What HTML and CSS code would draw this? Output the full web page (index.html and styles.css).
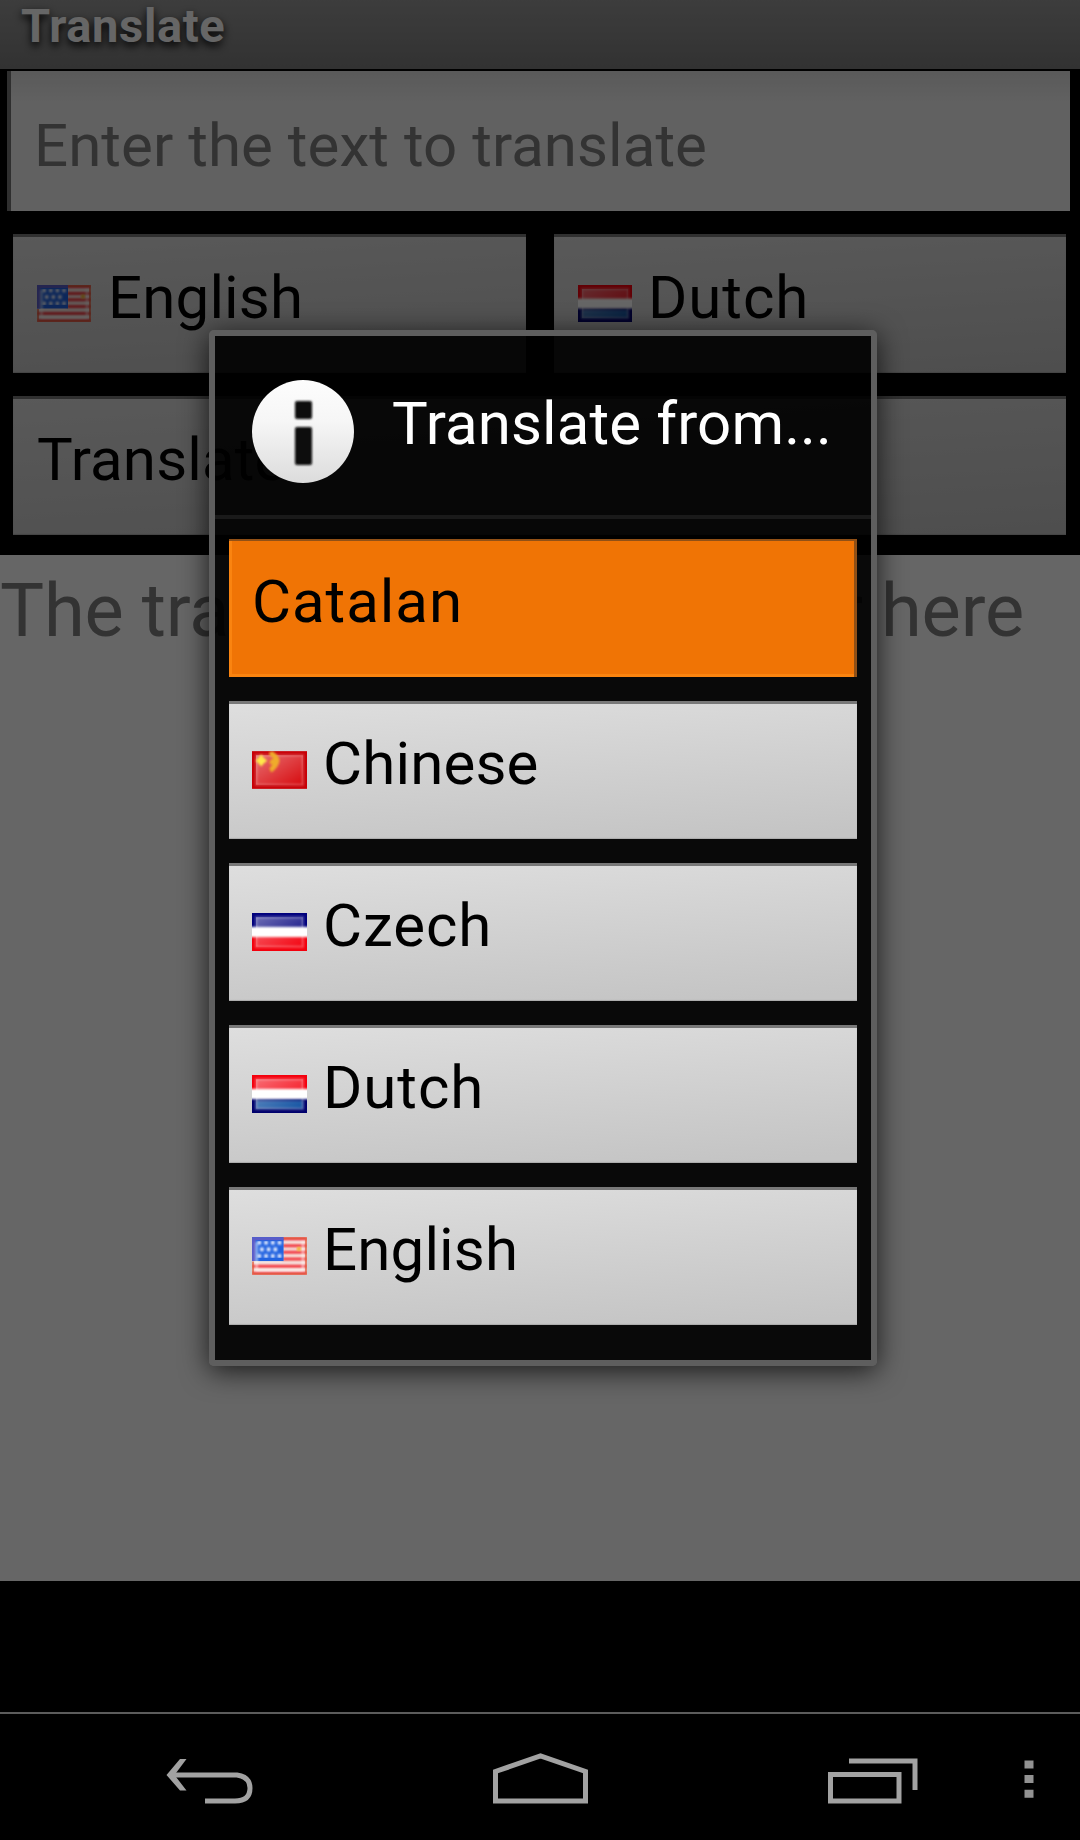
FILE: index.html
```
<!DOCTYPE html>
<html lang="en">
<head>
<meta charset="utf-8">
<title>Translate</title>
<link rel="stylesheet" href="styles.css">
</head>
<body>
<svg class="defs" width="0" height="0" aria-hidden="true">
  <defs>
    <filter id="soft" x="-10%" y="-10%" width="120%" height="120%"><feGaussianBlur stdDeviation="0.9"/></filter>
    <filter id="glow" x="-10%" y="-10%" width="120%" height="120%"><feGaussianBlur stdDeviation="1.1"/></filter>
    <linearGradient id="gloss" x1="0" y1="0" x2="1" y2="1">
      <stop offset="0" stop-color="#fff" stop-opacity=".42"/>
      <stop offset="1" stop-color="#fff" stop-opacity=".02"/>
    </linearGradient>
    <linearGradient id="disc" x1="0" y1="0" x2="0" y2="1">
      <stop offset="0" stop-color="#fdfdfd"/>
      <stop offset=".4" stop-color="#f6f6f6"/>
      <stop offset="1" stop-color="#dcdcdc"/>
    </linearGradient>
    <symbol id="flag-nl" viewBox="0 0 54 37">
      <rect width="54" height="37" fill="#fff"/>
      <g filter="url(#soft)">
        <rect x="-4" y="-4" width="62" height="17.500" fill="#f40008"/>
        <rect x="-4" y="23.500" width="62" height="18" fill="#00006c"/>
      </g>
      <rect x="4" y="25" width="46" height="8" fill="#0d4fa0" filter="url(#soft)"/>
      <rect x="4" y="4" width="46" height="29" fill="url(#gloss)"/>
      <rect x="4" y="4" width="46" height="29" fill="none" stroke="#fff" stroke-opacity=".3" stroke-width="2" filter="url(#soft)"/>
    </symbol>
    <symbol id="flag-cz" viewBox="0 0 54 37">
      <rect width="54" height="37" fill="#fff"/>
      <g filter="url(#soft)">
        <rect x="-4" y="-4" width="62" height="17.500" fill="#00007c"/>
        <rect x="-4" y="23.500" width="62" height="18" fill="#f3000a"/>
      </g>
      <rect x="4" y="4" width="46" height="29" fill="url(#gloss)"/>
      <rect x="4" y="4" width="46" height="29" fill="none" stroke="#fff" stroke-opacity=".3" stroke-width="2" filter="url(#soft)"/>
    </symbol>
    <symbol id="flag-cn" viewBox="0 0 54 37">
      <rect width="54" height="37" fill="#c80006"/>
      <rect x="4" y="4" width="46" height="29" fill="#d6060a"/>
      <rect x="4" y="4" width="46" height="29" fill="url(#gloss)"/>
      <rect x="4" y="4" width="46" height="29" fill="none" stroke="#fff" stroke-opacity=".25" stroke-width="2" filter="url(#soft)"/>
      <path d="M9 3l2.500 3.500 3.500 3-3.500 2.500-2.500 3-2.500-3-3-2.500 3-3z" fill="#ffe84a" filter="url(#soft)"/>
      <path d="M17 1l3-1q7 4 7 10-1 6-8 11l-2-4 3-4-3-1 1-3 3-2-4-3z" fill="#efac2c" filter="url(#soft)"/>
    </symbol>
    <symbol id="flag-us" viewBox="0 0 54 37">
      <rect width="54" height="37" fill="#f6e6e0"/>
      <path d="M0 1.500H54M30 8.500H54M30 14.800H54M30 21.500H54M0 28.500H54M0 35.500H54" stroke="#f2303a" stroke-width="3" filter="url(#glow)"/>
      <rect width="31" height="23.500" fill="#2263e0"/>
      <path d="M0 0H31V3H3.500V23.500H0z" fill="#5a5cc8"/>
      <path d="M5.500 5.500H29M8 12H25M5.500 18.500H29" stroke="#f2f5ff" stroke-width="3.600" stroke-dasharray="3.400 3.200" filter="url(#soft)"/>
      <path d="M4.500 5V32.500H50V4" fill="none" stroke="#fff" stroke-opacity=".55" stroke-width="2.400" filter="url(#soft)"/>
      <path d="M1 24V36H53V1H31" fill="none" stroke="#dd5a3c" stroke-opacity=".7" stroke-width="2"/>
      <circle cx="46" cy="11.500" r="2.200" fill="#f3b52c" filter="url(#soft)"/>
    </symbol>
  </defs>
</svg>

<div class="screen">
  <main class="window">
    <header class="titlebar">Translate</header>
    <section class="form">
      <div class="field">Enter the text to translate</div>
      <div class="pair">
        <div class="button"><svg class="flag"><use href="#flag-us"/></svg><span>English</span></div>
        <div class="button"><svg class="flag"><use href="#flag-nl"/></svg><span class="wide">Dutch</span></div>
      </div>
      <div class="button">Translate</div>
    </section>
    <section class="result"><span class="hint">The translation will appear here</span></section>
  </main>
  <div class="dim"></div>

  <div class="dialog">
    <div class="dialog-head">
      <svg class="info" viewBox="0 0 102 103">
        <ellipse cx="51" cy="51.500" rx="51" ry="51.500" fill="url(#disc)"/>
        <g fill="#080808" filter="url(#glow)"><rect x="43" y="21" width="17" height="18" rx="2"/><rect x="43" y="47" width="17" height="38" rx="2"/></g>
      </svg>
      <span class="dialog-title">Translate from...</span>
    </div>
    <div class="list">
      <div class="button pressed"><span class="wide">Catalan</span></div>
      <div class="button"><svg class="flag"><use href="#flag-cn"/></svg><span>Chinese</span></div>
      <div class="button"><svg class="flag"><use href="#flag-cz"/></svg><span class="wide">Czech</span></div>
      <div class="button"><svg class="flag"><use href="#flag-nl"/></svg><span class="wide">Dutch</span></div>
      <div class="button"><svg class="flag"><use href="#flag-us"/></svg><span>English</span></div>
    </div>
  </div>

  <nav class="navbar">
    <svg class="back" viewBox="0 0 88 48" fill="none" stroke="#a2a2a2" stroke-width="5"><path d="M7 17H71Q84 19 84 30Q84 43 69 43H39"/><path d="M14 1H20.500L8.500 17L20.500 32.500H14L0.500 17z" fill="#a2a2a2" stroke="none"/></svg>
    <svg class="home" viewBox="0 0 95 51" fill="none" stroke="#a2a2a2" stroke-width="5"><path d="M2.500 48V18.500L47.500 3L92.500 18.500V48z"/></svg>
    <svg class="recents" viewBox="0 0 90 46" fill="none" stroke="#a2a2a2" stroke-width="5"><path d="M2.500 16.500H71V43H2.500zM21 3H87V32"/></svg>
    <svg class="more" viewBox="0 0 10 39" fill="#929292"><path d="M0.500 0.500h9v8h-9zM0.500 15h9v8h-9zM0.500 29.700h9v8h-9z"/></svg>
  </nav>
</div>
</body>
</html>
```
FILE: styles.css
```
* { box-sizing: border-box; }
body { margin: 0; background: #000; font-family: Roboto, sans-serif; }
.defs { position: absolute; }
.screen {
  position: relative;
  width: 1080px;
  height: 1840px;
  overflow: hidden;
  background: #000;
  display: flex;
  flex-direction: column;
}
.window { height: 1581px; display: flex; flex-direction: column; }
.titlebar {
  height: 69px;
  padding-left: 21px;
  background: linear-gradient(#989898, #7d7d7d);
  color: #fff;
  font-size: 47px;
  font-weight: 700;
  letter-spacing: .65px;
  line-height: 51px;
  text-shadow: 0 4px 9px #000;
}
.form { height: 486px; padding-top: 2px; display: flex; flex-direction: column; }
.field {
  height: 140px;
  margin: 0 10px 0 7px;
  padding-left: 23px;
  border-left: 4px solid #777;
  background: linear-gradient(#e0e0e0, #f2f2f2 22%, #f2f2f2);
  color: #808080;
  font-size: 60px;
  letter-spacing: .06px;
  line-height: 150px;
}
.pair { display: grid; grid-template-columns: 513px 512px; column-gap: 28px; margin: 23px 0 23px 13px; }
.form > .button { margin: 0 14px 0 13px; }
.button {
  height: 139px;
  padding-left: 24px;
  display: flex;
  border-top: 3px solid #787878;
  background: linear-gradient(176deg, #dedede, #c4c4c4 95%);
  box-shadow: inset 0 -1px 1px #aaa;
  color: #000;
  font-size: 60px;
  letter-spacing: .15px;
  line-height: 121px;
}
.wide { letter-spacing: .95px; }
.pair .wide { margin-left: -1px; }
.flag { width: 54px; height: 37px; margin: 48px 17px 0 0; flex: none; }
.result { flex: 1; background: #fff; color: #808080; font-size: 74px; letter-spacing: -.17px; line-height: 111px; white-space: nowrap; }
.dim { position: absolute; inset: 0 0 259px; background: rgba(0, 0, 0, .6); }

.dialog {
  position: absolute;
  left: 209px;
  top: 330px;
  width: 668px;
  height: 1036px;
  border: 6px solid #5e5e5e;
  border-radius: 5px;
  background: rgba(0, 0, 0, .91);
  background-clip: padding-box;
  box-shadow: 0 5px 28px rgba(0, 0, 0, .75);
}
.dialog-head {
  height: 183px;
  padding: 44px 0 0 37px;
  border-bottom: 4px solid #1a1a1a;
  display: flex;
}
.info { width: 102px; height: 103px; flex: none; }
.dialog-title { margin-left: 38px; color: #fff; font-size: 60px; letter-spacing: .12px; line-height: 88px; white-space: nowrap; }
.list { padding: 20px 14px 0; display: flex; flex-direction: column; gap: 24px; }
.list .button { height: 138px; padding-left: 23px; line-height: 119px; }
.list .flag { width: 55px; height: 38px; margin: 47px 16px 0 0; }
.list .pressed {
  background: #f07405;
  border-top: 2px solid #915016;
  border-right: 3px solid #915016;
  box-shadow: inset 3px -3px 0 #fa8410;
  line-height: 121px;
}

.navbar {
  height: 128px;
  margin-top: 131px;
  border-top: 2px solid #5c5c5c;
  display: flex;
}
.back { width: 88px; height: 48px; margin: 44px 0 0 166px; }
.home { width: 95px; height: 51px; margin: 39px 0 0 238.5px; }
.recents { width: 90px; height: 46px; margin: 44px 0 0 240.5px; }
.more { width: 10px; height: 39px; margin: 46px 0 0 105.5px; }
```
